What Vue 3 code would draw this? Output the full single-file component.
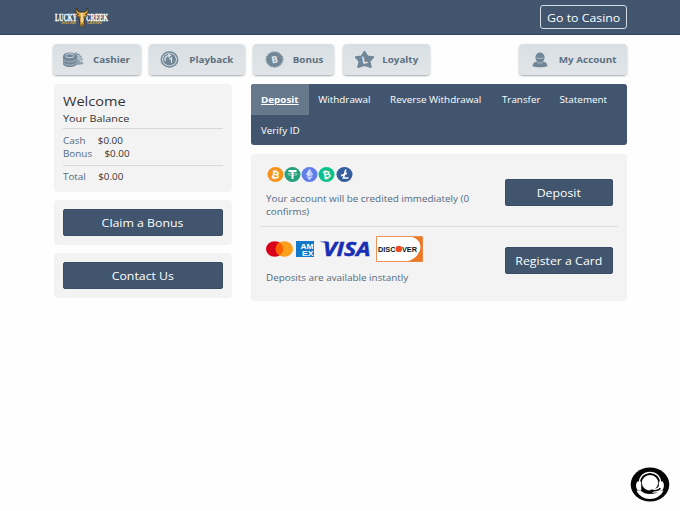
<template>
  <div class="page">
    <header class="header">
      <svg class="logo" width="56" height="23" viewBox="0 0 56 23">
        <text class="logo-word" x="1" y="14.5" textLength="22" lengthAdjust="spacingAndGlyphs">LUCKY</text>
        <text class="logo-word" x="32" y="14.5" textLength="22" lengthAdjust="spacingAndGlyphs">CREEK</text>
        <text class="logo-sub" x="7" y="18.2" textLength="15" lengthAdjust="spacingAndGlyphs">ONLINE</text>
        <text class="logo-sub" x="33" y="18.2" textLength="15" lengthAdjust="spacingAndGlyphs">CASINO</text>
        <path
          d="M23 2c-.5 3 1.500 4 4 4h2c2.500 0 4.500-1 4-4 2.400 3 .6 6-1.500 6.500l2 .7-1.700 1.800-1 .5-.6 5.500c.5 2.500-.9 4-2.200 4s-2.700-1.500-2.200-4l-.6-5.500-1-.5-1.700-1.800 2-.7C22.400 8 20.600 5 23 2z"
          fill="#d9a03c"
          stroke="#352b20"
          stroke-width=".8"
        />
        <path d="M26.500 7h3l-.5 9h-2z" fill="#f4d692" />
        <path d="M25.500 10.500l1 .8M30.500 10.500l-1 .8M27 19h2" stroke="#352b20" />
      </svg>
      <a class="casino-btn"><span class="t">Go to Casino</span></a>
    </header>

    <main class="container">
      <nav class="top-nav">
        <a v-for="item in menus" :key="item.icon" class="menu" :class="item.icon">
          <svg v-if="item.icon === 'cashier'" class="icon" width="23" height="18" viewBox="0 0 23 18">
            <path d="M13 2l2-1 .5 2 2-.5.5 2 2 .5-.8 1.600 2 2-1.500 1 2 3.400-7 1z" fill="#8fa0ae" />
            <path d="M14 5l5 6M16 4l4 7" stroke="#dfe4e8" stroke-width=".7" />
            <path d="M1 5v7.500c0 2 3 3.500 6.800 3.500s7-1.500 7-3.500V5z" />
            <ellipse cx="7.800" cy="5.200" rx="6.800" ry="3.700" />
            <ellipse cx="7.800" cy="4.800" rx="4.300" ry="2" fill="none" stroke="#e0e5e9" stroke-width=".8" />
            <path
              d="M1 8c2 3.800 11.500 3.800 13.800 0M1 11.200c2 3.800 11.500 3.800 13.800 0"
              fill="none"
              stroke="#c3cdd5"
              stroke-width=".6"
            />
          </svg>
          <svg v-else-if="item.icon === 'playback'" class="icon" width="19" height="17" viewBox="0 0 19 17">
            <ellipse cx="9.500" cy="8.500" rx="8.200" ry="7.400" fill="none" stroke="#718797" stroke-width="1.500" />
            <ellipse cx="9.500" cy="8.500" rx="6.500" ry="5.900" />
            <path d="M8.500 4.600c-3 .5-4.200 3-3.200 5.400" fill="none" stroke="#e0e5e9" stroke-width="1.300" />
            <path d="M8 2.600l3.500 1.700L8.500 7z" fill="#e0e5e9" />
            <path d="M9.300 8.300l2.200-1.500v5" fill="none" stroke="#e0e5e9" stroke-width="1.200" />
          </svg>
          <svg v-else-if="item.icon === 'bonus'" class="icon" width="19" height="17" viewBox="0 0 19 17">
            <ellipse cx="9.500" cy="8.500" rx="8.200" ry="7.500" />
            <ellipse
              cx="9.500"
              cy="8.500"
              rx="8.500"
              ry="7.800"
              fill="none"
              stroke="#718797"
              stroke-width="1"
              stroke-dasharray="1.500 1"
            />
            <text class="icon-letter" x="9.500" y="12" font-size="9.500" transform="rotate(-10 9.500 8.500)">B</text>
          </svg>
          <svg v-else-if="item.icon === 'loyalty'" class="icon" width="21" height="19" viewBox="0 0 21 19">
            <path
              d="M10.500 1.500l3 4.700 6 .9-3.800 4.400 1.300 5.700-6.500-2-6.500 2 1.300-5.700L1.500 7.100l6-.9z"
              stroke="#718797"
              stroke-width="1.500"
              stroke-linejoin="round"
            />
            <text class="icon-letter" x="10.500" y="13.500" font-size="10" transform="rotate(-12 10.500 10)">L</text>
          </svg>
          <svg v-else class="icon" width="16" height="16" viewBox="0 0 16 16">
            <path d="M.6 14.300c0-3.600 2.400-4.300 4.700-4.800h5.400c2.300.5 4.700 1.200 4.700 4.800-4 1.300-10.800 1.300-14.800 0z" />
            <ellipse cx="8" cy="5.600" rx="4.600" ry="5" />
            <path d="M4.500 6c2 .5 5 .5 7 0M4.800 9.800c2 1.800 4.400 1.800 6.400 0" fill="none" stroke="#b9c5ce" stroke-width=".8" />
          </svg>
          <span class="t">{{ item.label }}</span>
        </a>
      </nav>

      <div class="content">
        <aside class="side">
          <section class="card balance">
            <h1><span class="t">Welcome</span></h1>
            <h2><span class="t">Your Balance</span></h2>
            <dl class="amounts">
              <div v-for="row in balances" :key="row.label" :class="{ total: row.label === 'Total' }">
                <span class="t"><span class="label">{{ row.label }}</span>{{ row.value }}</span>
              </div>
            </dl>
          </section>
          <section v-for="label in actions" :key="label" class="card action">
            <button class="btn"><span class="t">{{ label }}</span></button>
          </section>
        </aside>

        <section class="main">
          <nav class="tabs">
            <a v-for="tab in tabs" :key="tab" class="tab" :class="[tab.split(' ')[0].toLowerCase(), { active: tab === current }]" @click="current = tab">
              <span class="t">{{ tab }}</span>
            </a>
          </nav>

          <div class="methods">
            <!-- crypto -->
            <div class="method crypto">
              <div class="info">
                <div class="coins">
                  <svg v-for="coin in coins" :key="coin.name" width="17.3" height="15" viewBox="0 0 17.300 15">
                    <ellipse cx="8.500" cy="7.500" rx="8" ry="7.400" :fill="coin.color" />
                    <text v-if="coin.sign" class="sign" x="8.500" y="11.200" :transform="`rotate(${coin.tilt} 8.500 7.500)`">{{ coin.sign }}</text>
                    <g v-else-if="coin.name === 'tether'" fill="none" stroke="#fff">
                      <path d="M4.500 4h8M8.500 4v8" stroke-width="1.900" />
                      <ellipse cx="8.500" cy="7.300" rx="4.800" ry="1.100" stroke-width=".5" />
                    </g>
                    <g v-else-if="coin.name === 'ethereum'">
                      <path d="M8.500 1.800L5 7.600l3.500 2.100L12 7.600z" fill="#fff" opacity=".8" />
                      <path d="M8.500 1.800v7.900L12 7.600z" fill="#b9c7fa" />
                      <path d="M5 8.600l3.500 4.700L12 8.600l-3.500 2z" fill="#dce3ff" />
                    </g>
                    <path v-else d="M9.800 2.500L7.400 11h5M5 8.700l6-2.400" fill="none" stroke="#fff" stroke-width="1.600" />
                  </svg>
                </div>
                <p><span class="t">Your account will be credited immediately (0<br />confirms)</span></p>
              </div>
              <button class="btn"><span class="t">Deposit</span></button>
            </div>

            <!-- cards -->
            <div class="method cards">
              <div class="info">
                <div class="brands">
                  <svg width="28" height="16" viewBox="0 0 28 16">
                    <ellipse cx="8.700" cy="8" rx="8.700" ry="7.800" fill="#d9001b" />
                    <ellipse cx="18.300" cy="8" rx="8.700" ry="7.800" fill="#f99f1c" />
                    <path d="M13.500 1.600c5 3.500 5 9.300 0 12.800-5-3.500-5-9.300 0-12.800z" fill="#ff5f00" />
                  </svg>
                  <svg class="amex" width="18" height="16" viewBox="0 0 18 16">
                    <path d="M0 0h18v16H0z" fill="#1478c8" />
                    <text x="4.500" y="8" textLength="13" lengthAdjust="spacingAndGlyphs">AM</text>
                    <text x="6" y="14.500" textLength="11.500" lengthAdjust="spacingAndGlyphs">EX</text>
                  </svg>
                  <svg class="visa" width="54" height="18" viewBox="0 0 54 18">
                    <path d="M.3 1.500L8 1.500l2 4-3.500-2.500z" fill="#172eb5" />
                    <text x="4" y="16" textLength="47.500" lengthAdjust="spacingAndGlyphs">VISA</text>
                  </svg>
                  <svg class="discover" width="47" height="26" viewBox="0 0 47 26">
                    <path d="M.5.500h46v25H.5z" fill="#fff" stroke="#e9935b" />
                    <path d="M36 1c8 2 11 10 6 17-2 3.500-6 6-11 7.500h15.500V1z" fill="#ec7724" />
                    <text x="2" y="15.700" textLength="17.500" lengthAdjust="spacingAndGlyphs">DISC</text>
                    <circle cx="22.800" cy="12.900" r="3.200" fill="#ee4c22" />
                    <text x="26" y="15.700" textLength="15" lengthAdjust="spacingAndGlyphs">VER</text>
                  </svg>
                </div>
                <p><span class="t">Deposits are available instantly</span></p>
              </div>
              <button class="btn"><span class="t">Register a Card</span></button>
            </div>
          </div>
        </section>
      </div>
    </main>

    <!-- support chat -->
    <button class="support">
      <svg width="40" height="35" viewBox="0 0 40 35">
        <ellipse cx="20" cy="17.500" rx="19.300" ry="17" fill="#050505" />
        <path d="M6.500 23.500C9 29 14 32 20 32s11-3 13.500-8.500h-4c-2.500 2.500-5.500 3.500-9.500 3.500s-7-1-9.500-3.500z" fill="#fff" />
        <path d="M9.500 17C8.500 1.500 31.500 1.500 30.500 17" fill="none" stroke="#fff" stroke-width="1.500" />
        <ellipse cx="20" cy="15.800" rx="9" ry="8.600" fill="#fff" stroke="#050505" stroke-width="1.800" />
        <path d="M7.500 14.500h3.700v9H9c-3 0-4-7-1.500-9zM32.500 14.500h-3.700v9H31c3 0 4-7 1.500-9z" fill="#fff" />
        <path d="M30.300 20c-1 3.500-4 3.800-8 3.800" fill="none" stroke="#fff" stroke-width="4" />
        <path d="M30.300 21c-1 2.500-4 2.800-8 2.800" fill="none" stroke="#050505" stroke-width="1.500" />
        <ellipse cx="22" cy="23.800" rx="2" ry="1.400" fill="#050505" />
      </svg>
    </button>
  </div>
</template>

<script setup>
import { ref } from 'vue'

const menus = [
  { icon: 'cashier', label: 'Cashier' },
  { icon: 'playback', label: 'Playback' },
  { icon: 'bonus', label: 'Bonus' },
  { icon: 'loyalty', label: 'Loyalty' },
  { icon: 'account', label: 'My Account' },
]

const balances = [
  { label: 'Cash', value: '$0.00' },
  { label: 'Bonus', value: '$0.00' },
  { label: 'Total', value: '$0.00' },
]

const actions = ['Claim a Bonus', 'Contact Us']

const tabs = ['Deposit', 'Withdrawal', 'Reverse Withdrawal', 'Transfer', 'Statement', 'Verify ID']
const current = ref('Deposit')

const coins = [
  { name: 'bitcoin', color: '#f7931a', sign: '₿', tilt: 12 },
  { name: 'tether', color: '#26a17b' },
  { name: 'ethereum', color: '#627eea' },
  { name: 'bitcoin-cash', color: '#0ac18e', sign: '₿', tilt: -14 },
  { name: 'litecoin', color: '#345d9d' },
]
</script>

<style>
body {
  margin: 0;
  background: #fefefe;
}
</style>

<style scoped>
.page {
  height: 511px;
  overflow: hidden;
  font-family: 'Open Sans', sans-serif;
  font-size: 8.8px;
  color: #333;
}

/* wide lettering */
.t {
  display: inline-block;
  flex: none;
  white-space: nowrap;
  transform: scaleX(1.12);
}

.header {
  display: flex;
  justify-content: space-between;
  align-items: center;
  box-sizing: border-box;
  height: 35px;
  padding: 0 53px 0 54px;
  background: #41566e;
  border-bottom: 1px solid #31445c;
}

.logo-word {
  font: bold 10.5px 'Liberation Serif', serif;
  fill: #fff;
  stroke: #fff;
  stroke-width: 0.3px;
}

.logo-sub {
  font-size: 3.6px;
  font-weight: bold;
  fill: #c9a64c;
}

.casino-btn {
  display: flex;
  align-items: center;
  justify-content: center;
  box-sizing: border-box;
  width: 87px;
  height: 24px;
  border: 1px solid #d3dae2;
  border-radius: 3px;
  color: #fff;
  font-size: 11px;
}

.container {
  width: 573px;
  margin: 0 53px 0 54px;
}

.top-nav {
  display: flex;
  gap: 8px;
  margin: 9px -1px 9px;
}

.menu {
  display: flex;
  align-items: center;
  box-sizing: border-box;
  height: 31px;
  border-radius: 4px;
  background: linear-gradient(#d9dfe3, #e1e5e8);
  box-shadow: 0 1px 2px #a3a7ab;
  color: #5c7080;
  font-weight: bold;
}

.menu .t {
  margin-left: auto;
  transform-origin: right;
}

.icon {
  fill: #718797;
}

.icon-letter {
  fill: #e4e9ed;
  font-weight: bold;
  text-anchor: middle;
}

.cashier {
  width: 88px;
  padding: 0 11px 0 9px;
}

.playback {
  width: 96px;
  padding: 0 12px 0 11px;
}

.bonus {
  width: 81px;
  padding: 0 11px 0 12px;
}

.loyalty {
  width: 87px;
  margin-left: 1px;
  padding: 0 12px 0 11px;
}

.account {
  width: 108px;
  margin: 0 1px 0 auto;
  padding: 0 10px 0 13px;
}

.content {
  display: flex;
  justify-content: space-between;
}

.side {
  display: flex;
  flex-direction: column;
  gap: 8px;
  width: 178px;
}

.card,
.methods {
  border-radius: 4px;
  background: #f3f3f3;
}

.card {
  box-sizing: border-box;
  padding: 9px;
}

.balance {
  height: 108px;
}

.balance .t,
.info .t {
  transform-origin: left;
}

h1,
h2,
p,
dl {
  margin: 0;
  font-weight: normal;
}

h1 {
  font-size: 13px;
  line-height: 17px;
}

h2 {
  font-size: 9.7px;
  line-height: 18px;
  border-bottom: 1px solid #d9d9d9;
}

.amounts {
  padding-top: 6px;
  line-height: 13px;
}

.label {
  margin-right: 11px;
  color: #546b80;
}

.total {
  margin-top: 4px;
  padding-top: 5px;
  border-top: 1px solid #d9d9d9;
}

.action {
  height: 45px;
}

.btn {
  display: flex;
  align-items: center;
  justify-content: center;
  box-sizing: border-box;
  width: 160px;
  height: 27px;
  padding: 0 0 1px;
  border: 1px solid #384d65;
  border-radius: 2px;
  background: #41566e;
  color: #fff;
  font: 11px 'Open Sans', sans-serif;
}

.main {
  width: 376px;
}

.tabs {
  display: flex;
  flex-wrap: wrap;
  height: 61px;
  margin-bottom: 9px;
  border-radius: 3px;
  background: #41566e;
  overflow: hidden;
}

.tab {
  display: flex;
  align-items: center;
  justify-content: center;
  width: 58px;
  height: 31px;
  color: #fff;
}

.tab.active {
  background: #66788b;
  font-weight: bold;
  text-decoration: underline;
}

.tab.withdrawal {
  width: 71px;
}

.tab.reverse {
  width: 112px;
}

.tab.statement {
  width: 67px;
}

.methods {
  box-sizing: border-box;
  height: 147px;
  padding: 0 9px;
}

.method {
  display: flex;
  justify-content: space-between;
  box-sizing: border-box;
  height: 73px;
  padding: 0 5.5px 0 6px;
}

.crypto {
  padding-top: 13px;
  border-bottom: 1px solid #ddd;
}

.cards {
  padding-top: 9px;
}

.method .btn {
  width: 108px;
}

.crypto .btn {
  margin-top: 12px;
}

.cards .btn {
  margin-top: 11px;
}

.info {
  color: #546b80;
  line-height: 13px;
}

.coins,
.brands {
  display: flex;
}

.coins {
  height: 15px;
  margin: 0 0 10.5px 0.5px;
}

.sign {
  fill: #fff;
  font: bold 10px 'DejaVu Sans', sans-serif;
  text-anchor: middle;
}

.brands {
  align-items: center;
  height: 25px;
  margin-bottom: 10.5px;
}

.amex {
  margin-left: 2px;
}

.amex text {
  fill: #fff;
  font: bold 7.5px 'Liberation Sans', sans-serif;
}

.visa {
  margin: 0 3px 0 5px;
}

.visa text {
  fill: #172eb5;
  stroke: #172eb5;
  stroke-width: 0.5px;
  font: italic bold 19.5px 'Open Sans', sans-serif;
}

.discover text {
  fill: #111;
  font: bold 7.6px 'Liberation Sans', sans-serif;
}

.support {
  position: absolute;
  left: 630px;
  top: 467px;
  width: 40px;
  height: 35px;
  padding: 0;
  border: 0;
  background: none;
}
</style>
